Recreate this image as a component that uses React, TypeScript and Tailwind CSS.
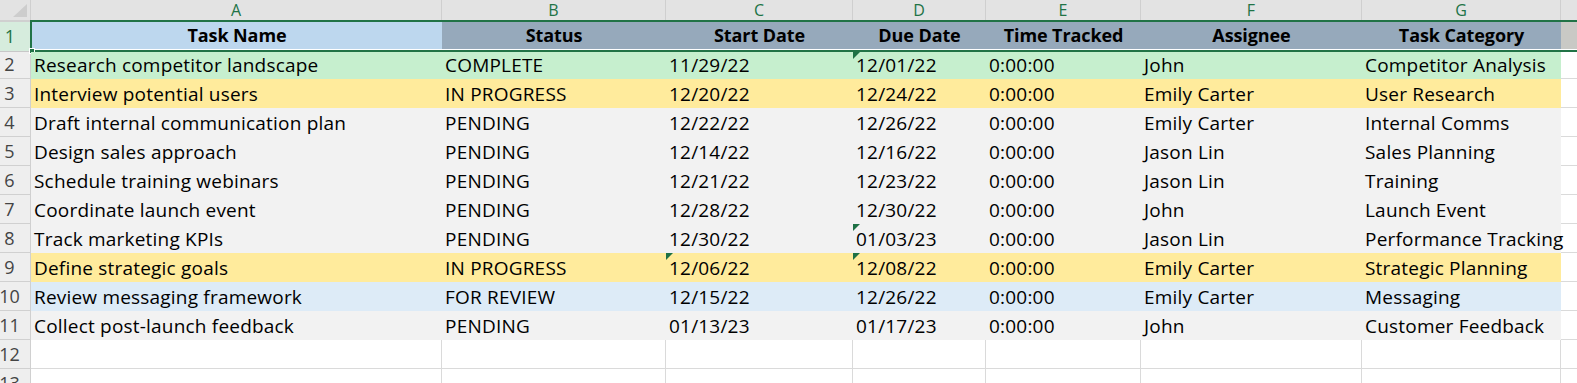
import React from "react";

type Col = { letter: string; title: string; w: string };

const cols: Col[] = [
  { letter: "A", title: "Task Name", w: "w-[411px]" },
  { letter: "B", title: "Status", w: "w-[224px]" },
  { letter: "C", title: "Start Date", w: "w-[187px]" },
  { letter: "D", title: "Due Date", w: "w-[133px]" },
  { letter: "E", title: "Time Tracked", w: "w-[155px]" },
  { letter: "F", title: "Assignee", w: "w-[221px]" },
  { letter: "G", title: "Task Category", w: "w-[199px]" },
];

type Row = { cells: string[]; bg: string; marks?: number[] };

const rows: Row[] = [
  { cells: ["Research competitor landscape", "COMPLETE", "11/29/22", "12/01/22", "0:00:00", "John", "Competitor Analysis"], bg: "bg-[#c6efce]", marks: [3] },
  { cells: ["Interview potential users", "IN PROGRESS", "12/20/22", "12/24/22", "0:00:00", "Emily Carter", "User Research"], bg: "bg-[#ffeb9c]" },
  { cells: ["Draft internal communication plan", "PENDING", "12/22/22", "12/26/22", "0:00:00", "Emily Carter", "Internal Comms"], bg: "bg-[#f2f2f2]" },
  { cells: ["Design sales approach", "PENDING", "12/14/22", "12/16/22", "0:00:00", "Jason Lin", "Sales Planning"], bg: "bg-[#f2f2f2]" },
  { cells: ["Schedule training webinars", "PENDING", "12/21/22", "12/23/22", "0:00:00", "Jason Lin", "Training"], bg: "bg-[#f2f2f2]" },
  { cells: ["Coordinate launch event", "PENDING", "12/28/22", "12/30/22", "0:00:00", "John", "Launch Event"], bg: "bg-[#f2f2f2]" },
  { cells: ["Track marketing KPIs", "PENDING", "12/30/22", "01/03/23", "0:00:00", "Jason Lin", "Performance Tracking"], bg: "bg-[#f2f2f2]", marks: [3] },
  { cells: ["Define strategic goals", "IN PROGRESS", "12/06/22", "12/08/22", "0:00:00", "Emily Carter", "Strategic Planning"], bg: "bg-[#ffeb9c]", marks: [2, 3] },
  { cells: ["Review messaging framework", "FOR REVIEW", "12/15/22", "12/26/22", "0:00:00", "Emily Carter", "Messaging"], bg: "bg-[#ddebf7]" },
  { cells: ["Collect post-launch feedback", "PENDING", "01/13/23", "01/17/23", "0:00:00", "John", "Customer Feedback"], bg: "bg-[#f2f2f2]" },
];

function RowNum({ n }: { n: number }) {
  return (
    <div className="w-[31px] h-[29px] shrink-0 flex justify-center pr-[11px] bg-[#eeeeee] border-r border-b border-[#d0d0d0] text-[#444] text-[18px] leading-[29px]">
      {n}
    </div>
  );
}

function Mark() {
  return <div className="absolute left-0 top-0 w-0 h-0 border-t-[7px] border-r-[7px] border-t-[#1e7145] border-r-transparent" />;
}

export default function App() {
  return (
    <div className="w-[1577px] h-[383px] overflow-hidden bg-white text-black" style={{ fontFamily: "'Open Sans', Lato, sans-serif" }}>
      {/* column letters */}
      <div className="flex h-[20px] bg-[#e3e3e3]">
        <div className="w-[31px] shrink-0 relative border-r border-[#cfcfcf]">
          <svg className="absolute right-[3px] bottom-[3px]" width="14" height="13" viewBox="0 0 14 13">
            <polygon points="14,0 14,13 0,13" fill="#cdcdcd" />
          </svg>
        </div>
        {cols.map((c) => (
          <div key={c.letter} className={`${c.w} shrink-0 text-center border-r border-[#cfcfcf] text-[#217346] text-[16px] leading-[20px]`}>
            {c.letter}
          </div>
        ))}
        <div className="flex-1" />
      </div>

      {/* row 1 - header, selected */}
      <div className="flex h-[32px]">
        <div className="w-[30px] shrink-0 flex flex-col">
          <div className="h-[2px] bg-[#d0d0d0]" />
          <div className="flex-1 flex justify-center pr-[10px] bg-[#d6ecdd] text-[#217346] text-[18px] leading-[28px] border-b border-[#c8c8c8]">1</div>
        </div>
        <div className="flex-1 flex relative border-l-2 border-t-2 border-b-2 border-[#217346]">
          <div className="flex w-full border-b border-white">
            {cols.map((c, i) => (
              <div
                key={c.letter}
                className={`${i === 0 ? "w-[410px] bg-[#bdd7ee]" : `${c.w} bg-[#96a9bb]`} shrink-0 text-center font-bold text-[18px] leading-[27px] tracking-[-0.1px]`}
              >
                {c.title}
              </div>
            ))}
            <div className="flex-1 bg-[#c9c9c5]" />
          </div>
          <div className="absolute -left-[3px] -bottom-[4px] w-[6px] h-[6px] bg-[#217346] border border-white" />
        </div>
      </div>

      {/* data rows */}
      {rows.map((r, ri) => (
        <div key={ri} className={`flex ${ri === 0 ? "h-[27px]" : "h-[29px]"}`}>
          <div className={`w-[31px] ${ri === 0 ? "h-[27px] leading-[25px]" : "h-[29px] leading-[29px]"} shrink-0 flex justify-center pr-[11px] bg-[#eeeeee] border-r border-b border-[#d0d0d0] text-[#444] text-[18px]`}>
            {ri + 2}
          </div>
          {r.cells.map((t, ci) => (
            <div
              key={ci}
              className={`${cols[ci].w} shrink-0 relative ${r.bg} pl-[3px] text-[19px] tracking-[0.2px] ${ri === 0 ? "leading-[26px]" : "leading-[30px]"} whitespace-nowrap`}
            >
              {r.marks?.includes(ci) && <Mark />}
              {t}
            </div>
          ))}
          <div className="flex-1 border-b border-[#dadada]" />
        </div>
      ))}

      {/* empty rows */}
      {[12, 13].map((n) => (
        <div key={n} className="flex h-[29px]">
          <RowNum n={n} />
          {cols.map((c) => (
            <div key={c.letter} className={`${c.w} shrink-0 border-r border-b border-[#dadada]`} />
          ))}
          <div className="flex-1 border-b border-[#dadada]" />
        </div>
      ))}
    </div>
  );
}
